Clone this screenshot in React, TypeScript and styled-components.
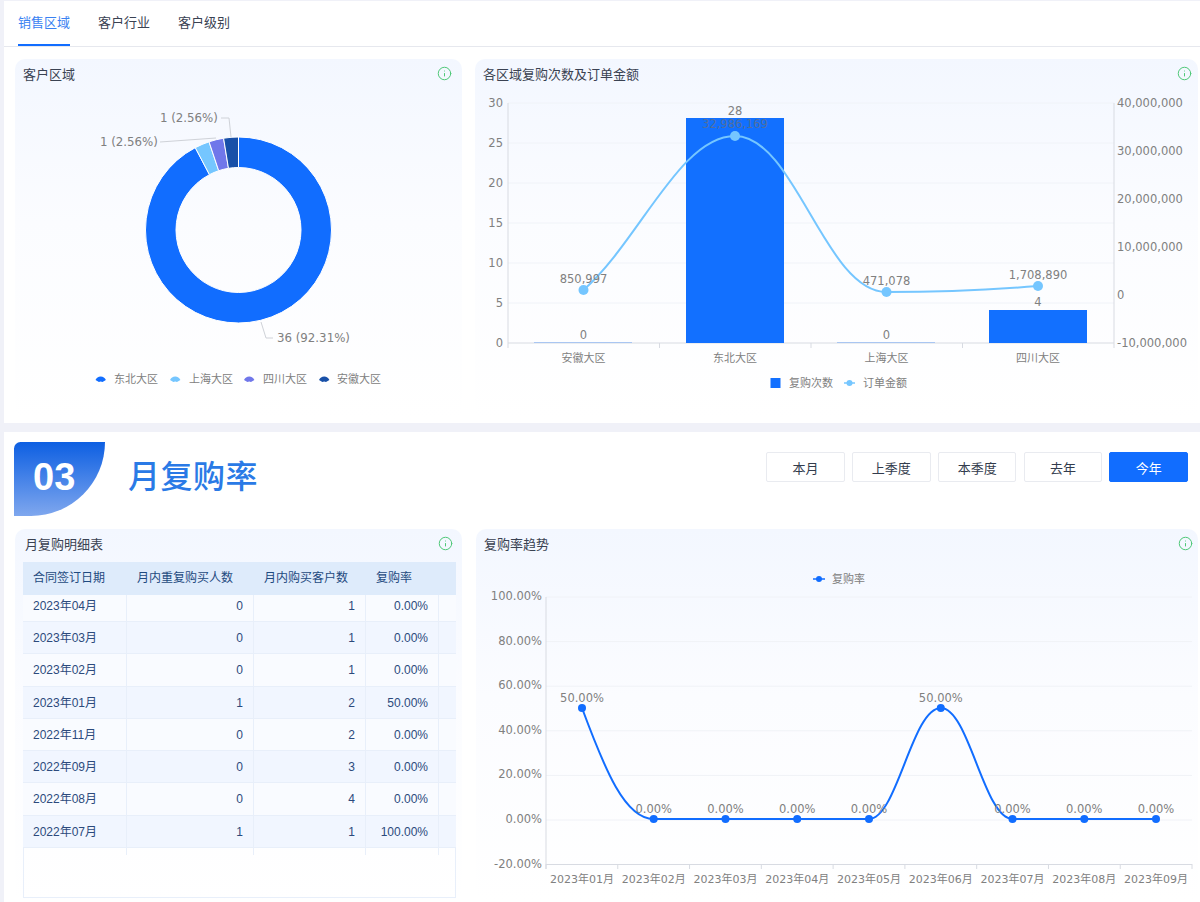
import React from "react";
import styled, { createGlobalStyle } from "styled-components";
import { Info } from "lucide-react";

const Global = createGlobalStyle`
  html, body { margin: 0; padding: 0; background: #f0f1f8; }
  #root { width: 1200px; height: 902px; overflow: hidden; }
  * { box-sizing: border-box; }
`;

const Page = styled.div`
  width: 1200px;
  height: 902px;
  overflow: hidden;
  padding: 1px 0 0 4px;
  display: flex;
  flex-direction: column;
  gap: 9px;
  font-family: "Liberation Sans", "Noto Sans CJK SC", sans-serif;
`;
const Panel = styled.section<{ $h: number }>`
  background: #fff;
  height: ${(p) => p.$h}px;
  flex: none;
`;
const TabBar = styled.nav`
  height: 46px;
  display: flex;
  gap: 28px;
  padding-left: 14px;
  border-bottom: 1px solid #e6e8ee;
`;
const Tab = styled.div<{ $active?: boolean }>`
  height: 45px;
  line-height: 44px;
  font-size: 13px;
  color: ${(p) => (p.$active ? "#3a82f2" : "#3a4252")};
  border-bottom: 2px solid ${(p) => (p.$active ? "#116dff" : "transparent")};
`;
const CardRow = styled.div<{ $top: number; $gap: number }>`
  display: flex;
  gap: ${(p) => p.$gap}px;
  padding: ${(p) => p.$top}px 2px 0 11px;
`;
const Card = styled.div<{ $w: number; $h: number }>`
  width: ${(p) => p.$w}px;
  height: ${(p) => p.$h}px;
  flex: none;
  border-radius: 10px;
  background: linear-gradient(180deg, #f3f7ff 0%, #fbfcff 45%, #ffffff 100%);
`;
const CardHead = styled.header<{ $pad: number; $end: number }>`
  height: 30px;
  padding: 0 ${(p) => p.$end}px 2px ${(p) => p.$pad}px;
  display: flex;
  align-items: center;
  justify-content: space-between;
  font-size: 13px;
  color: #3a4252;
`;
const InfoIcon = styled(Info)`
  color: #4fc878;
  flex: none;
`;
const ChartSvg = styled.svg`
  display: block;
`;
const Label = styled.text<{ $size?: number; $color?: string }>`
  font-family: "DejaVu Sans", "Noto Sans CJK SC", sans-serif;
  font-size: ${(p) => p.$size ?? 11.5}px;
  fill: ${(p) => p.$color ?? "#808080"};
  dominant-baseline: central;
`;
const SectionHead = styled.div`
  display: flex;
  align-items: flex-start;
  padding: 10px 12px 0 10px;
  height: 84px;
`;
const Badge = styled.div`
  width: 91px;
  height: 74px;
  flex: none;
  border-radius: 8px 0 91px 0;
  background: linear-gradient(180deg, #0d5fe2 0%, #7fa7ee 100%);
  color: #fff;
  font: 700 38px/70px "Liberation Sans", sans-serif;
  padding-left: 19px;
`;
const SectionTitle = styled.h2`
  margin: 0 0 0 23px;
  font: 500 32px/64px "Noto Sans CJK SC", sans-serif;
  letter-spacing: 0.5px;
  color: #2a7ae6;
  flex: 1;
`;
const Buttons = styled.div`
  display: flex;
  gap: 7.2px;
  margin-top: 10px;
`;
const RangeButton = styled.button<{ $active?: boolean }>`
  width: 78.6px;
  height: 30px;
  border-radius: 2px;
  border: 1px solid ${(p) => (p.$active ? "#116dff" : "#e9ebf0")};
  background: ${(p) => (p.$active ? "#116dff" : "#fff")};
  color: ${(p) => (p.$active ? "#fff" : "#333c4d")};
  font: 13px "Liberation Sans", "Noto Sans CJK SC", sans-serif;
  padding: 0;
`;
const TableBox = styled.div`
  width: 433px;
  height: 336px;
  margin: 3px 0 0 8px;
  border: 1px solid #e8effa;
  border-top: none;
  font-size: 12px;
  color: #2c4a7c;
`;
const COLS = "104px 127px 112px 73px 16px";
const HeadRow = styled.div`
  display: grid;
  grid-template-columns: ${COLS};
  height: 33px;
  background: #deebfb;
  color: #1f4a80;
  margin-left: -1px;
  width: 433px;
`;
const HeadCell = styled.div`
  padding-left: 10px;
  line-height: 33px;
  white-space: nowrap;
`;
const Row = styled.div<{ $striped: boolean; $h: number }>`
  display: grid;
  grid-template-columns: ${COLS};
  height: ${(p) => p.$h}px;
  background: ${(p) => (p.$striped ? "#f1f6ff" : "#f9fbff")};
  border-bottom: 1px solid #e8effa;
  margin-left: -1px;
  width: 433px;
`;
const Cell = styled.div<{ $right?: boolean; $offset: number }>`
  padding: 0 10px;
  text-align: ${(p) => (p.$right ? "right" : "left")};
  border-right: 1px solid #e8effa;
  line-height: ${(p) => p.$offset}px;
  white-space: nowrap;
  overflow: hidden;
`;
const EndCell = styled.div``;
const Filler = styled.div`
  display: grid;
  grid-template-columns: ${COLS};
  height: 7px;
  margin-left: -1px;
  width: 433px;
`;
const FillerCell = styled.div`
  border-right: 1px solid #e8effa;
`;

const rows = [
  ["2023年04月", "0", "1", "0.00%"],
  ["2023年03月", "0", "1", "0.00%"],
  ["2023年02月", "0", "1", "0.00%"],
  ["2023年01月", "1", "2", "50.00%"],
  ["2022年11月", "0", "2", "0.00%"],
  ["2022年09月", "0", "3", "0.00%"],
  ["2022年08月", "0", "4", "0.00%"],
  ["2022年07月", "1", "1", "100.00%"],
];

function arc(cx: number, cy: number, R: number, r: number, a0: number, a1: number) {
  const p = (rad: number, a: number) => [cx + rad * Math.sin(a), cy - rad * Math.cos(a)];
  const [x0, y0] = p(R, a0);
  const [x1, y1] = p(R, a1);
  const [x2, y2] = p(r, a1);
  const [x3, y3] = p(r, a0);
  const large = a1 - a0 > Math.PI ? 1 : 0;
  return `M${x0} ${y0}A${R} ${R} 0 ${large} 1 ${x1} ${y1}L${x2} ${y2}A${r} ${r} 0 ${large} 0 ${x3} ${y3}Z`;
}

const pie = [
  { v: 36, c: "#116dff", n: "东北大区", ix: 95.5, tx: 114 },
  { v: 1, c: "#75c6ff", n: "上海大区", ix: 170, tx: 189 },
  { v: 1, c: "#7077ea", n: "四川大区", ix: 244, tx: 263 },
  { v: 1, c: "#1850a8", n: "安徽大区", ix: 319, tx: 337 },
];

function Donut() {
  let acc = 0;
  const total = 39;
  return (
    <ChartSvg width={447} height={331} viewBox="15 89 447 331">
      {pie.map((s) => {
        const a0 = (acc / total) * Math.PI * 2;
        acc += s.v;
        const a1 = (acc / total) * Math.PI * 2;
        return <path key={s.n} d={arc(238.5, 230, 93, 62.5, a0, a1)} fill={s.c} stroke="#fff" strokeWidth={1} />;
      })}
      <polyline points="221,118 229,118 231,137" fill="none" stroke="#cfd2d8" />
      <polyline points="160,142 216,138" fill="none" stroke="#cfd2d8" />
      <polyline points="261,322 266,338 273,338" fill="none" stroke="#cfd2d8" />
      <Label x={160} y={118} $size={11.8}>1 (2.56%)</Label>
      <Label x={100} y={142} $size={11.8}>1 (2.56%)</Label>
      <Label x={277} y={338} $size={11.8}>36 (92.31%)</Label>
      {pie.map((s) => (
        <g key={s.n}>
          <path
            d={`M${s.ix} 380Q${s.ix + 1.5} 376.5 ${s.ix + 5.2} 376.5Q${s.ix + 8.9} 376.5 ${s.ix + 10.4} 380L${s.ix + 7} 382Q${s.ix + 5.2} 380.8 ${s.ix + 3.4} 382Z`}
            fill={s.c}
          />
          <Label x={s.tx} y={379} $size={11}>{s.n}</Label>
        </g>
      ))}
    </ChartSvg>
  );
}

function BarLine() {
  const leftTicks = [30, 25, 20, 15, 10, 5, 0];
  const rightTicks = ["40,000,000", "30,000,000", "20,000,000", "10,000,000", "0", "-10,000,000"];
  const cats = [
    ["安徽大区", 583.5],
    ["东北大区", 735],
    ["上海大区", 886.5],
    ["四川大区", 1038],
  ] as const;
  return (
    <ChartSvg width={723} height={331} viewBox="475 89 723 331">
      {leftTicks.slice(0, 6).map((t, i) => (
        <line key={t} x1={508} x2={1114} y1={103 + i * 40} y2={103 + i * 40} stroke="#f0f3f8" />
      ))}
      <line x1={508} x2={508} y1={103} y2={348} stroke="#d8dbe2" />
      <line x1={1114} x2={1114} y1={103} y2={343} stroke="#d8dbe2" />
      <line x1={508} x2={1114} y1={343} y2={343} stroke="#d8dbe2" />
      {[659.5, 811, 962.5, 1114].map((x) => (
        <line key={x} x1={x} x2={x} y1={343} y2={348} stroke="#d8dbe2" />
      ))}
      {leftTicks.map((t, i) => (
        <Label key={t} x={503} y={102.5 + i * 40} textAnchor="end">{t}</Label>
      ))}
      {rightTicks.map((t, i) => (
        <Label key={t} x={1117} y={102.5 + i * 48}>{t}</Label>
      ))}
      <rect x={686} y={118} width={98} height={225} fill="#1270ff" />
      <rect x={989} y={310} width={98} height={33} fill="#1270ff" />
      <rect x={534} y={342} width={98} height={1} fill="#a9c6f2" />
      <rect x={837} y={342} width={98} height={1} fill="#a9c6f2" />
      <path
        d="M583.5 290C640 240 680 136 735 136C795 136 825 292 886.5 292C936 292 988 290 1038 286"
        fill="none"
        stroke="#75c6ff"
        strokeWidth={2}
      />
      {[[583.5, 290], [735, 136], [886.5, 292], [1038, 286]].map(([x, y]) => (
        <circle key={x} cx={x} cy={y} r={5} fill="#75c6ff" />
      ))}
      <Label x={735} y={111} textAnchor="middle">28</Label>
      <Label x={735} y={124} textAnchor="middle" $color="#4f6f9f">32,986,169</Label>
      <Label x={583.5} y={335} textAnchor="middle">0</Label>
      <Label x={886.5} y={335} textAnchor="middle">0</Label>
      <Label x={1038} y={302} textAnchor="middle">4</Label>
      <Label x={583.5} y={279} textAnchor="middle">850,997</Label>
      <Label x={886.5} y={281} textAnchor="middle">471,078</Label>
      <Label x={1038} y={275} textAnchor="middle">1,708,890</Label>
      {cats.map(([n, x]) => (
        <Label key={n} x={x} y={358} textAnchor="middle" $size={11}>{n}</Label>
      ))}
      <rect x={770.5} y={378} width={10} height={10} fill="#1270ff" />
      <Label x={789} y={383} $size={11}>复购次数</Label>
      <line x1={844} x2={855} y1={383} y2={383} stroke="#75c6ff" strokeWidth={1.5} />
      <circle cx={849.5} cy={383} r={3} fill="#75c6ff" />
      <Label x={863} y={383} $size={11}>订单金额</Label>
    </ChartSvg>
  );
}

function Trend() {
  const ticks = ["100.00%", "80.00%", "60.00%", "40.00%", "20.00%", "0.00%", "-20.00%"];
  const xs = [582, 653.7, 725.5, 797.2, 869, 940.8, 1012.5, 1084.3, 1156];
  const months = ["01", "02", "03", "04", "05", "06", "07", "08", "09"];
  const ys = [708, 819, 819, 819, 819, 708, 819, 819, 819];
  return (
    <ChartSvg width={722} height={343} viewBox="476 559 722 343">
      {ticks.slice(0, 6).map((t, i) => (
        <line key={t} x1={546} x2={1192} y1={597 + i * 44.6} y2={597 + i * 44.6} stroke="#f0f2f7" />
      ))}
      <line x1={546} x2={546} y1={597} y2={869} stroke="#d8dbe2" />
      <line x1={546} x2={1192} y1={864.5} y2={864.5} stroke="#d8dbe2" />
      {months.concat("10").map((m, i) => (
        <line key={m} x1={546 + i * 71.78} x2={546 + i * 71.78} y1={864} y2={869} stroke="#d8dbe2" />
      ))}
      {ticks.map((t, i) => (
        <Label key={t} x={542} y={596 + i * 44.6} textAnchor="end">{t}</Label>
      ))}
      <line x1={813} x2={825} y1={579} y2={579} stroke="#116dff" strokeWidth={1.5} />
      <circle cx={819} cy={579} r={3} fill="#116dff" />
      <Label x={832} y={579} $size={11}>复购率</Label>
      <path
        d="M582 708C605 770 625 819 653.7 819L869 819C897 819 912 708 940.8 708C969 708 984 819 1012.5 819L1156 819"
        fill="none"
        stroke="#116dff"
        strokeWidth={2}
      />
      {xs.map((x, i) => (
        <g key={x}>
          <circle cx={x} cy={ys[i]} r={4} fill="#116dff" />
          <Label x={x} y={ys[i] - 10.5} textAnchor="middle">{ys[i] === 708 ? "50.00%" : "0.00%"}</Label>
          <Label x={x} y={879} textAnchor="middle" $size={11}>{`2023年${months[i]}月`}</Label>
        </g>
      ))}
    </ChartSvg>
  );
}

export default function App() {
  return (
    <Page>
      <Global />
      <Panel $h={422}>
        <TabBar>
          <Tab $active>销售区域</Tab>
          <Tab>客户行业</Tab>
          <Tab>客户级别</Tab>
        </TabBar>
        <CardRow $top={12} $gap={13}>
          <Card $w={447} $h={361}>
            <CardHead $pad={8} $end={10}>
              客户区域
              <InfoIcon size={15} strokeWidth={1.6} />
            </CardHead>
            <Donut />
          </Card>
          <Card $w={723} $h={361}>
            <CardHead $pad={8} $end={6}>
              各区域复购次数及订单金额
              <InfoIcon size={15} strokeWidth={1.6} />
            </CardHead>
            <BarLine />
          </Card>
        </CardRow>
      </Panel>
      <Panel $h={470}>
        <SectionHead>
          <Badge>03</Badge>
          <SectionTitle>月复购率</SectionTitle>
          <Buttons>
            <RangeButton>本月</RangeButton>
            <RangeButton>上季度</RangeButton>
            <RangeButton>本季度</RangeButton>
            <RangeButton>去年</RangeButton>
            <RangeButton $active>今年</RangeButton>
          </Buttons>
        </SectionHead>
        <CardRow $top={13} $gap={14}>
          <Card $w={447} $h={373}>
            <CardHead $pad={10} $end={9}>
              月复购明细表
              <InfoIcon size={15} strokeWidth={1.6} />
            </CardHead>
            <TableBox>
              <HeadRow>
                <HeadCell>合同签订日期</HeadCell>
                <HeadCell>月内重复购买人数</HeadCell>
                <HeadCell>月内购买客户数</HeadCell>
                <HeadCell>复购率</HeadCell>
                <HeadCell />
              </HeadRow>
              {rows.map((r, i) => (
                <Row key={r[0]} $striped={i % 2 === 1} $h={i === 0 ? 27 : 32.25}>
                  <Cell $offset={i === 0 ? 22 : 32}>{r[0]}</Cell>
                  <Cell $right $offset={i === 0 ? 22 : 32}>{r[1]}</Cell>
                  <Cell $right $offset={i === 0 ? 22 : 32}>{r[2]}</Cell>
                  <Cell $right $offset={i === 0 ? 22 : 32}>{r[3]}</Cell>
                  <EndCell />
                </Row>
              ))}
              <Filler>
                <FillerCell />
                <FillerCell />
                <FillerCell />
                <FillerCell />
              </Filler>
            </TableBox>
          </Card>
          <Card $w={722} $h={373}>
            <CardHead $pad={8} $end={5}>
              复购率趋势
              <InfoIcon size={15} strokeWidth={1.6} />
            </CardHead>
            <Trend />
          </Card>
        </CardRow>
      </Panel>
    </Page>
  );
}
